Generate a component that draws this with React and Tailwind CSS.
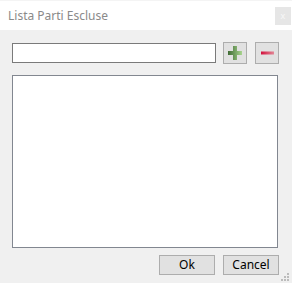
import React from "react";

const font = { fontFamily: '"Segoe UI", "Noto Sans", "Open Sans", sans-serif' };

const IconButton = ({ children }) => (
  <button className="w-[24px] h-[22px] flex items-center justify-center bg-[#e1e1e1] border border-[#adadad]">
    {children}
  </button>
);

const DialogButton = ({ label }) => (
  <button className="w-[56px] h-[20px] flex items-center justify-center bg-[#e1e1e1] border border-[#adadad] text-[12px] text-black leading-none">
    {label}
  </button>
);

const Grip = () => {
  const dots = [
    [6, 0],
    [3, 3],
    [6, 3],
    [0, 6],
    [3, 6],
    [6, 6],
  ];
  return (
    <div className="absolute right-[3px] bottom-[2px] w-[8px] h-[8px]">
      {dots.map(([x, y], i) => (
        <span
          key={i}
          className="absolute w-[2px] h-[2px] bg-[#bcbcbc]"
          style={{ left: x, top: y }}
        />
      ))}
    </div>
  );
};

export default function App() {
  return (
    <div className="relative w-[292px] h-[283px] bg-[#f0f0f0] flex flex-col" style={font}>
      {/* Title bar */}
      <div className="h-[30px] bg-white flex items-center justify-between border-t border-[#f4f4f4]">
        <span className="pl-[8px] text-[12px] text-[#8a8a8a]">Lista Parti Escluse</span>
        <span className="mr-[1px] w-[16px] h-[18px] bg-[#e6e6e6] flex items-center justify-center text-[9px] text-[#f8f8f8] leading-none">
          x
        </span>
      </div>

      {/* Body */}
      <div className="pl-[12px] w-[279px] flex flex-col">
        <div className="mt-[12px] flex items-center">
          <input className="w-[204px] h-[20px] bg-white border border-[#7a7a7a] outline-none" />
          <div className="ml-[7px]">
            <IconButton>
              <svg width="14" height="14" viewBox="0 0 14 14">
                <defs>
                  <linearGradient id="gp" x1="0" y1="0" x2="1" y2="0">
                    <stop offset="0" stopColor="#3f6b34" />
                    <stop offset="1" stopColor="#a9d58f" />
                  </linearGradient>
                </defs>
                <path d="M5 0h4v5h5v4H9v5H5V9H0V5h5z" fill="url(#gp)" />
              </svg>
            </IconButton>
          </div>
          <div className="ml-[8px]">
            <IconButton>
              <svg width="13" height="4" viewBox="0 0 13 4">
                <defs>
                  <linearGradient id="gm" x1="0" y1="0" x2="1" y2="0">
                    <stop offset="0" stopColor="#d3103c" />
                    <stop offset="1" stopColor="#e28896" />
                  </linearGradient>
                </defs>
                <rect x="0" y="0.5" width="13" height="3" fill="url(#gm)" />
              </svg>
            </IconButton>
          </div>
        </div>

        <div className="mt-[11px] w-[266px] h-[173px] bg-white border border-[#828790]" />

        <div className="mt-[7px] flex justify-end gap-[8px]">
          <DialogButton label="Ok" />
          <DialogButton label="Cancel" />
        </div>
      </div>

      <Grip />
    </div>
  );
}
